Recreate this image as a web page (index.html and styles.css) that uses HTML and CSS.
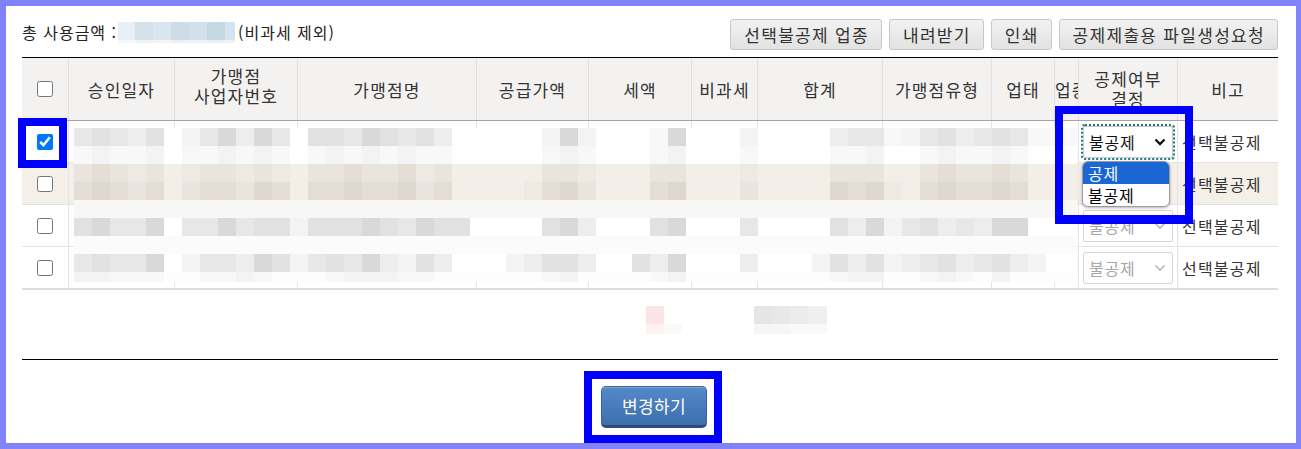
FILE: index.html
```html
<!DOCTYPE html>
<html lang="ko">
<head>
<meta charset="utf-8">
<title>공제여부 결정</title>
<link rel="stylesheet" href="styles.css">
</head>
<body>
<div class="frame">
  <div class="topbar">
    <div class="total"><span>총 사용금액 :</span><span class="amount-blur"></span><span>(비과세 제외)</span></div>
    <div class="actions">
      <button class="btn" type="button">선택불공제 업종</button>
      <button class="btn" type="button">내려받기</button>
      <button class="btn" type="button">인쇄</button>
      <button class="btn" type="button">공제제출용 파일생성요청</button>
    </div>
  </div>

  <div class="table-wrap">
    <div class="row head">
      <div class="cell"><input type="checkbox" class="chk"></div>
      <div class="cell">승인일자</div>
      <div class="cell two"><span>가맹점<br>사업자번호</span></div>
      <div class="cell">가맹점명</div>
      <div class="cell">공급가액</div>
      <div class="cell">세액</div>
      <div class="cell">비과세</div>
      <div class="cell">합계</div>
      <div class="cell">가맹점유형</div>
      <div class="cell">업태</div>
      <div class="cell cut">업종</div>
      <div class="cell pair"><span>공제여부<br>결정</span></div>
      <div class="cell">비고</div>
    </div>

    <div class="row tr">
      <div class="cell"><input type="checkbox" class="chk" checked></div>
      <div class="cell"></div><div class="cell"></div><div class="cell"></div><div class="cell"></div><div class="cell"></div>
      <div class="cell"></div><div class="cell"></div><div class="cell"></div><div class="cell"></div><div class="cell"></div>
      <div class="cell"><div class="sel focus"><span>불공제</span><svg viewBox="0 0 12 8"><path d="M1.5 1.5 6 6l4.5-4.5"/></svg></div></div>
      <div class="cell note">선택불공제</div>
    </div>

    <div class="row tr alt">
      <div class="cell"><input type="checkbox" class="chk"></div>
      <div class="cell"></div><div class="cell"></div><div class="cell"></div><div class="cell"></div><div class="cell"></div>
      <div class="cell"></div><div class="cell"></div><div class="cell"></div><div class="cell"></div><div class="cell"></div>
      <div class="cell"></div>
      <div class="cell note">선택불공제</div>
    </div>

    <div class="row tr">
      <div class="cell"><input type="checkbox" class="chk"></div>
      <div class="cell"></div><div class="cell"></div><div class="cell"></div><div class="cell"></div><div class="cell"></div>
      <div class="cell"></div><div class="cell"></div><div class="cell"></div><div class="cell"></div><div class="cell"></div>
      <div class="cell"><div class="sel off"><span>불공제</span><svg viewBox="0 0 12 8"><path d="M1.5 1.5 6 6l4.5-4.5"/></svg></div></div>
      <div class="cell note">선택불공제</div>
    </div>

    <div class="row tr last">
      <div class="cell"><input type="checkbox" class="chk"></div>
      <div class="cell"></div><div class="cell"></div><div class="cell"></div><div class="cell"></div><div class="cell"></div>
      <div class="cell"></div><div class="cell"></div><div class="cell"></div><div class="cell"></div><div class="cell"></div>
      <div class="cell"><div class="sel off"><span>불공제</span><svg viewBox="0 0 12 8"><path d="M1.5 1.5 6 6l4.5-4.5"/></svg></div></div>
      <div class="cell note">선택불공제</div>
    </div>

    <svg class="mosaic" width="1003" height="154" aria-hidden="true">
      <rect class="bg-a" y="0"/>
      <rect class="bg-b" y="36"/>
      <rect class="bg-c" y="72"/>
      <rect class="bg-d" y="90"/>
      <rect class="bg-e" y="108"/>
      <rect class="bg-f" y="126"/>
      <rect class="bg-g" y="144"/>
      <g>
        <rect class="s3" x="0"/><rect class="s2" x="18"/><rect class="s3" x="36"/><rect class="s4" x="54"/><rect class="s2" x="72"/>
        <rect class="s5" x="108"/><rect class="s3" x="126"/><rect class="s1" x="144"/><rect class="s4" x="162"/><rect class="s1" x="180"/><rect class="s3" x="198"/>
        <rect class="s2" x="234"/><rect class="s2" x="252"/><rect class="s3" x="270"/><rect class="s1" x="288"/><rect class="s2" x="306"/><rect class="s3" x="324"/><rect class="s2" x="342"/><rect class="s4" x="360"/>
        <rect class="s5" x="468"/><rect class="s1" x="486"/><rect class="s5" x="504"/>
        <rect class="s6" x="576"/><rect class="s1" x="594"/>
        <rect class="s5" x="666"/>
        <rect class="s4" x="756"/><rect class="s3" x="774"/><rect class="s3" x="792"/><rect class="s6" x="810"/>
        <rect class="s5" x="828"/><rect class="s3" x="846"/><rect class="s2" x="864"/><rect class="s4" x="882"/><rect class="s3" x="900"/><rect class="s2" x="918"/><rect class="s3" x="936"/>
        <rect class="s6" x="954"/><rect class="s6" x="972"/><rect class="s6" x="990"/>
      </g>
      <g transform="translate(0,18)">
        <rect class="s6" x="0"/><rect class="s5" x="18"/><rect class="s6" x="36"/><rect class="s6" x="54"/><rect class="s5" x="72"/>
        <rect class="s6" x="108"/><rect class="s6" x="126"/><rect class="s5" x="144"/><rect class="s6" x="162"/><rect class="s5" x="180"/><rect class="s6" x="198"/>
        <rect class="s6" x="234"/><rect class="s5" x="252"/><rect class="s6" x="270"/><rect class="s5" x="288"/><rect class="s6" x="306"/><rect class="s5" x="324"/><rect class="s6" x="342"/><rect class="s6" x="360"/>
        <rect class="s6" x="468"/><rect class="s5" x="486"/><rect class="s6" x="504"/>
        <rect class="s6" x="576"/><rect class="s5" x="594"/>
        <rect class="s6" x="666"/>
        <rect class="s6" x="756"/><rect class="s6" x="774"/><rect class="s5" x="792"/>
        <rect class="s6" x="846"/><rect class="s5" x="864"/><rect class="s6" x="882"/><rect class="s6" x="900"/><rect class="s5" x="918"/><rect class="s6" x="936"/>
      </g>
      <g transform="translate(0,36)">
        <rect class="b3" x="0"/><rect class="b2" x="18"/><rect class="b3" x="36"/><rect class="b4" x="54"/><rect class="b3" x="72"/>
        <rect class="b4" x="108"/><rect class="b3" x="126"/><rect class="b3" x="144"/><rect class="b4" x="162"/><rect class="b3" x="180"/><rect class="b4" x="198"/>
        <rect class="b3" x="234"/><rect class="b3" x="252"/><rect class="b2" x="270"/><rect class="b3" x="288"/><rect class="b3" x="306"/><rect class="b2" x="324"/><rect class="b4" x="342"/><rect class="b3" x="360"/>
        <rect class="b3" x="468"/><rect class="b3" x="486"/><rect class="b4" x="504"/>
        <rect class="b3" x="576"/><rect class="b3" x="594"/>
        <rect class="b4" x="666"/>
        <rect class="b3" x="756"/><rect class="b3" x="774"/><rect class="b3" x="792"/>
        <rect class="b3" x="846"/><rect class="b2" x="864"/><rect class="b3" x="882"/><rect class="b3" x="900"/><rect class="b2" x="918"/><rect class="b3" x="936"/>
      </g>
      <g transform="translate(0,54)">
        <rect class="b2" x="0"/><rect class="b1" x="18"/><rect class="b2" x="36"/><rect class="b3" x="54"/><rect class="b2" x="72"/>
        <rect class="b3" x="108"/><rect class="b2" x="126"/><rect class="b2" x="144"/><rect class="b3" x="162"/><rect class="b1" x="180"/><rect class="b2" x="198"/>
        <rect class="b2" x="234"/><rect class="b2" x="252"/><rect class="b1" x="270"/><rect class="b2" x="288"/><rect class="b2" x="306"/><rect class="b1" x="324"/><rect class="b3" x="342"/><rect class="b2" x="360"/>
        <rect class="b4" x="450"/><rect class="b2" x="468"/><rect class="b1" x="486"/><rect class="b3" x="504"/>
        <rect class="b2" x="576"/><rect class="b1" x="594"/>
        <rect class="b3" x="666"/>
        <rect class="b1" x="756"/><rect class="b2" x="774"/><rect class="b1" x="792"/><rect class="b4" x="810"/>
        <rect class="b2" x="846"/><rect class="b1" x="864"/><rect class="b2" x="882"/><rect class="b2" x="900"/><rect class="b1" x="918"/><rect class="b2" x="936"/>
      </g>
      <g transform="translate(0,90)">
        <rect class="s2" x="0"/><rect class="s1" x="18"/><rect class="s3" x="36"/><rect class="s3" x="54"/><rect class="s1" x="72"/>
        <rect class="s3" x="108"/><rect class="s3" x="126"/><rect class="s1" x="144"/><rect class="s3" x="162"/><rect class="s2" x="180"/><rect class="s2" x="198"/><rect class="s5" x="216"/>
        <rect class="s2" x="234"/><rect class="s2" x="252"/><rect class="s2" x="270"/><rect class="s1" x="288"/><rect class="s2" x="306"/><rect class="s3" x="324"/><rect class="s1" x="342"/><rect class="s2" x="360"/><rect class="s2" x="378"/>
        <rect class="s2" x="468"/><rect class="s1" x="486"/><rect class="s4" x="504"/>
        <rect class="s2" x="576"/><rect class="s1" x="594"/>
        <rect class="s3" x="666"/>
        <rect class="s2" x="756"/><rect class="s4" x="774"/><rect class="s1" x="792"/><rect class="s5" x="810"/>
        <rect class="s3" x="828"/><rect class="s2" x="846"/><rect class="s4" x="864"/><rect class="s3" x="882"/><rect class="s4" x="900"/><rect class="s1" x="918"/><rect class="s1" x="936"/>
      </g>
      <g transform="translate(0,126)">
        <rect class="s3" x="0"/><rect class="s2" x="18"/><rect class="s3" x="36"/><rect class="s3" x="54"/><rect class="s1" x="72"/>
        <rect class="s5" x="108"/><rect class="s3" x="126"/><rect class="s3" x="144"/><rect class="s4" x="162"/><rect class="s1" x="180"/><rect class="s2" x="198"/><rect class="s5" x="216"/>
        <rect class="s3" x="234"/><rect class="s2" x="252"/><rect class="s3" x="270"/><rect class="s1" x="288"/><rect class="s4" x="306"/><rect class="s5" x="324"/><rect class="s2" x="342"/><rect class="s4" x="360"/>
        <rect class="s5" x="432"/><rect class="s4" x="450"/><rect class="s2" x="468"/><rect class="s2" x="486"/><rect class="s4" x="504"/>
        <rect class="s2" x="558"/><rect class="s4" x="576"/><rect class="s1" x="594"/>
        <rect class="s4" x="666"/>
        <rect class="s5" x="738"/><rect class="s2" x="756"/><rect class="s4" x="774"/><rect class="s2" x="792"/><rect class="s5" x="810"/>
        <rect class="s4" x="828"/><rect class="s3" x="846"/><rect class="s2" x="864"/><rect class="s4" x="882"/><rect class="s3" x="900"/><rect class="s2" x="918"/><rect class="s4" x="936"/><rect class="s5" x="954"/>
      </g>
      <g class="h10" transform="translate(0,144)">
        <rect class="s5" x="0"/><rect class="s5" x="18"/><rect class="s6" x="36"/><rect class="s6" x="54"/><rect class="s6" x="72"/>
        <rect class="s6" x="126"/><rect class="s6" x="144"/><rect class="s5" x="162"/><rect class="s6" x="180"/>
        <rect class="s6" x="252"/><rect class="s5" x="270"/><rect class="s5" x="288"/><rect class="s5" x="306"/><rect class="s6" x="324"/><rect class="s6" x="342"/>
        <rect class="s6" x="468"/><rect class="s5" x="486"/>
        <rect class="s6" x="576"/><rect class="s5" x="594"/>
        <rect class="s6" x="756"/><rect class="s5" x="774"/><rect class="s5" x="792"/>
        <rect class="s6" x="846"/><rect class="s5" x="864"/><rect class="s6" x="882"/><rect class="s5" x="918"/>
      </g>
    </svg>

    <div class="dropdown">
      <div class="opt on">공제</div>
      <div class="opt">불공제</div>
    </div>

    <div class="mark mark-check"></div>
    <div class="mark mark-select"></div>
  </div>

  <div class="summary">
    <span class="sum-tax"></span>
    <span class="sum-total"></span>
  </div>

  <div class="footer">
    <div class="btn-mark"><button class="save" type="button">변경하기</button></div>
  </div>
</div>
</body>
</html>
```

FILE: styles.css
```css
* {
  box-sizing: border-box;
}

html,
body {
  margin: 0;
  padding: 0;
  background: #fff;
}

body {
  font-family: "Noto Sans CJK KR", "Noto Sans", sans-serif;
  color: #333;
}

.frame {
  width: 1301px;
  height: 449px;
  border: 6px solid #8282fa;
  border-right-width: 5px;
  padding: 0 18px 0 16px;
  background: #fff;
  overflow: hidden;
}

/* top bar */
.topbar {
  display: flex;
  justify-content: space-between;
  align-items: flex-start;
  height: 51px;
  padding-top: 13px;
}

.total {
  display: flex;
  align-items: center;
  height: 31px;
  margin-top: -2px;
  font-size: 16px;
  line-height: 31px;
  letter-spacing: 1px;
  color: #222;
  white-space: nowrap;
}

.amount-blur {
  display: block;
  width: 117px;
  height: 21px;
  margin: 0 3px 0 1px;
  background:
    linear-gradient(rgba(255, 255, 255, 0) 18px, rgba(255, 255, 255, 0.6) 18px),
    linear-gradient(90deg, #e9eff4 0 17px, #d4e1ea 17px 35px, #dbe5ed 35px 53px, #cddce8 53px 71px, #d3e0e9 71px 89px, #c7d8e5 89px 107px, #d7e3ec 107px 117px);
}

.actions {
  display: flex;
  gap: 7px;
}

.btn {
  height: 31px;
  margin: 0;
  padding: 0 12px 0 13px;
  font-family: "Noto Sans CJK KR", "Noto Sans", sans-serif;
  font-size: 17px;
  line-height: 29px;
  letter-spacing: 1.3px;
  color: #333;
  background: linear-gradient(#f2f2f2, #e2e2e2);
  border: 1px solid #c8c8c8;
  border-radius: 3px;
  white-space: nowrap;
}

/* grid table */
.table-wrap {
  position: relative;
  border-top: 1px solid #000;
}

.row {
  display: grid;
  grid-template-columns: 46px 106px 123px 179px 112px 103px 66px 125px 109px 63px 24px 99px 101px;
}

.cell {
  display: flex;
  align-items: center;
  justify-content: center;
  text-align: center;
  border-left: 1px solid #e4e4e4;
  overflow: hidden;
  white-space: nowrap;
}

.cell:first-child {
  border-left: 0;
}

.head {
  height: 63px;
  background: #f4f2f0;
  border-bottom: 1px solid #a5a5a5;
}

.head .cell {
  font-size: 17px;
  line-height: 21px;
  letter-spacing: 1.2px;
  color: #333;
  border-left-color: #e2e0de;
}

.head .two {
  line-height: 20px;
  padding-bottom: 7px;
}

.head .pair {
  line-height: 20px;
}

.head .cut {
  justify-content: flex-start;
}

.tr {
  height: 42px;
  border-bottom: 1px solid #e4e4e4;
  font-size: 16px;
  line-height: 20px;
}

.tr.alt {
  background: #f4efe9;
}

.tr.last {
  height: 43px;
  border-bottom: 2px solid #dcdcdc;
}

.note {
  justify-content: flex-start;
  padding-left: 4px;
  letter-spacing: 1.2px;
  color: #333;
}

.chk {
  width: 16px;
  height: 16px;
  margin: 0;
}

/* select boxes */
.sel {
  width: 90px;
  height: 32px;
  display: flex;
  align-items: center;
  justify-content: space-between;
  padding: 0 6px 0 5px;
  border: 1px solid #c9c9c9;
  border-radius: 2px;
  background: #fff;
  font-size: 16px;
  line-height: 20px;
  letter-spacing: 0.8px;
  color: #111;
}

.sel svg {
  width: 12px;
  height: 8px;
}

.sel path {
  fill: none;
  stroke: #111;
  stroke-width: 2.3;
}

.sel.focus {
  outline: 2px dotted #1d7a7a;
}

.sel.off {
  color: #a6a6a6;
  border-color: #d4d4d4;
}

.sel.off path {
  stroke: #b8b8b8;
  stroke-width: 1.6;
}

/* blurred data mosaic */
.mosaic {
  position: absolute;
  left: 52px;
  top: 70px;
}

.mosaic rect {
  width: 18px;
  height: 18px;
}

.mosaic .h10 rect {
  height: 10px;
}

.mosaic rect.bg-a { width: 1003px; height: 36px; fill: #fff; }
.mosaic rect.bg-b { width: 1003px; height: 36px; fill: #f3eee8; }
.mosaic rect.bg-c { width: 1003px; height: 18px; fill: #f9f7f5; }
.mosaic rect.bg-d { width: 1003px; height: 18px; fill: #fff; }
.mosaic rect.bg-e { width: 1003px; height: 18px; fill: #fbfbfb; }
.mosaic rect.bg-f { width: 1003px; height: 18px; fill: #fff; }
.mosaic rect.bg-g { width: 1003px; height: 10px; fill: #fdfdfd; }

.mosaic .s1 { fill: #d9d9d9; }
.mosaic .s2 { fill: #e1e1e1; }
.mosaic .s3 { fill: #e7e7e7; }
.mosaic .s4 { fill: #ededed; }
.mosaic .s5 { fill: #f3f3f3; }
.mosaic .s6 { fill: #f8f8f8; }
.mosaic .b1 { fill: #ddd7d0; }
.mosaic .b2 { fill: #e3ddd6; }
.mosaic .b3 { fill: #e9e4dd; }
.mosaic .b4 { fill: #eee9e3; }

/* open dropdown list */
.dropdown {
  position: absolute;
  left: 1060px;
  top: 103px;
  width: 88px;
  height: 46px;
  border: 1px solid #9c9c9c;
  border-radius: 6px;
  background: #fff;
  overflow: hidden;
  box-shadow: 0 1px 3px rgba(0, 0, 0, 0.3);
  font-size: 16px;
  line-height: 22px;
  letter-spacing: 0.8px;
  color: #000;
}

.opt {
  height: 22px;
  padding-left: 5px;
}

.opt.on {
  background: #1a66d2;
  color: #fff;
}

/* annotation boxes */
.mark {
  position: absolute;
  border: 8px solid #0000ff;
}

.mark-check {
  left: -4px;
  top: 60px;
  width: 49px;
  height: 50px;
}

.mark-select {
  left: 1033px;
  top: 48px;
  width: 138px;
  height: 118px;
  border-bottom-width: 9px;
}

/* totals */
.summary {
  display: flex;
  align-items: flex-start;
  gap: 72px;
  height: 70px;
  padding: 16px 0 0 624px;
  border-bottom: 1px solid #000;
}

.sum-tax {
  display: block;
  width: 36px;
  height: 28px;
  background:
    linear-gradient(90deg, #fbe4e8 18px, #fff 18px) top / 100% 18px no-repeat,
    linear-gradient(90deg, #fdf1f1 18px, #f9f9f9 18px) bottom / 100% 10px no-repeat;
}

.sum-total {
  display: block;
  width: 73px;
  height: 28px;
  background:
    linear-gradient(90deg, #e5e5e5 18px, #e8e8e8 18px 36px, #ececec 36px 54px, #efefef 54px) top / 100% 18px no-repeat,
    linear-gradient(90deg, #f6f6f6 36px, #f9f9f9 36px) bottom / 100% 10px no-repeat;
}

/* footer */
.footer {
  display: flex;
  justify-content: center;
  padding: 11px 0 0 6px;
}

.btn-mark {
  border: 8px solid #0000ff;
  padding: 7px 7px 7px 9px;
}

.save {
  display: block;
  width: 106px;
  height: 42px;
  margin: 0;
  padding: 0;
  font-family: "Noto Sans CJK KR", "Noto Sans", sans-serif;
  font-size: 17px;
  line-height: 36px;
  letter-spacing: 0.3px;
  color: #fff;
  background: linear-gradient(#5489c9, #3e6fae);
  border: 1px solid #3a66a0;
  border-bottom: 3px solid #2a4c7c;
  border-radius: 5px;
  box-shadow: inset 0 1px 0 rgba(255, 255, 255, 0.25);
}
```
